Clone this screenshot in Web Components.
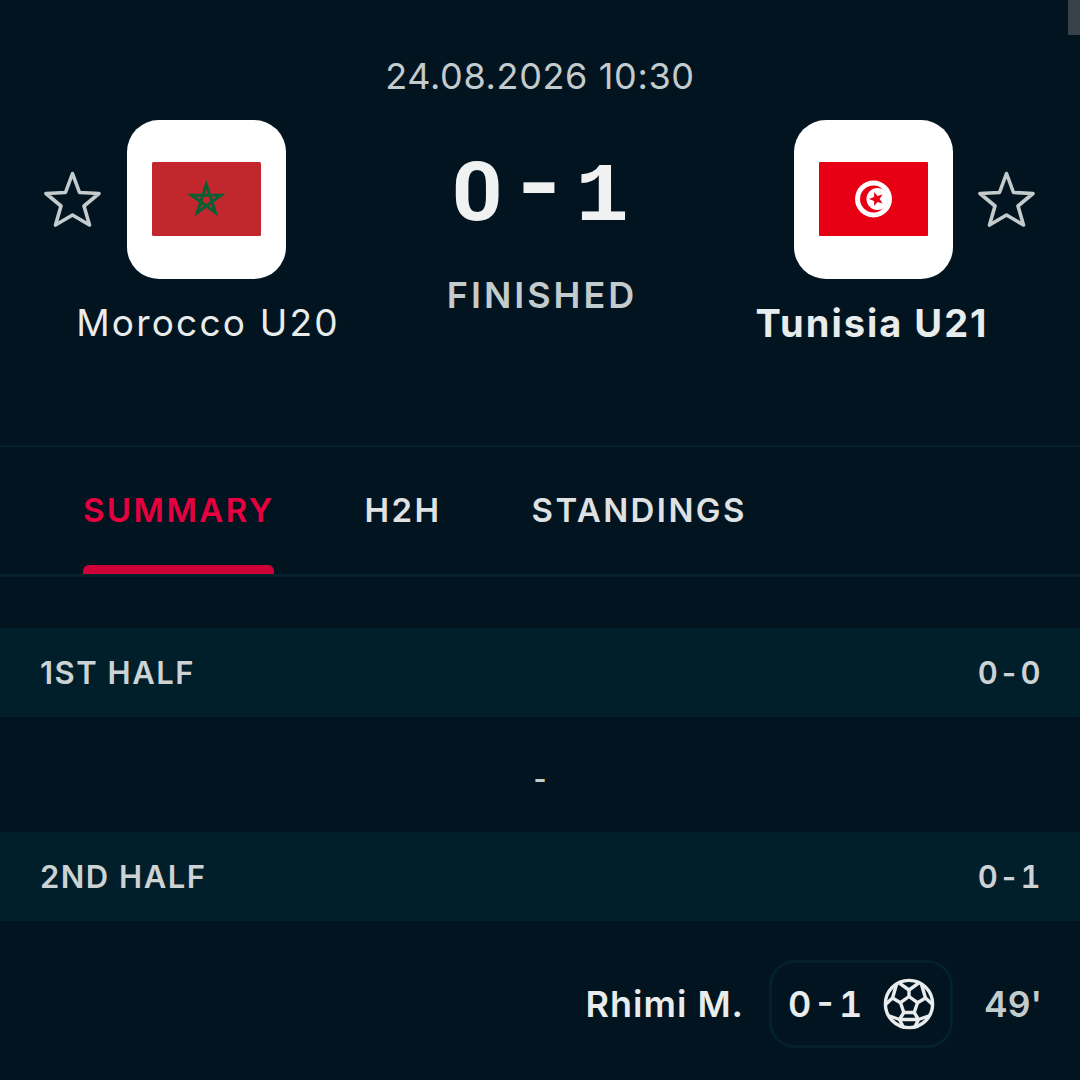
<!DOCTYPE html>
<html>
<head>
<meta charset="utf-8">
<style>
  html, body { margin: 0; background: #01141f; }
  body { width: 1080px; height: 1080px; overflow: hidden; font-family: Inter, "Liberation Sans", sans-serif; color: #e9ecec; position: relative; }
</style>
</head>
<body>
<match-header date="24.08.2026 10:30" status="FINISHED">
  <team-side slot="home" name="Morocco U20">
    <svg viewBox="0 0 109 74" width="109" height="74">
      <rect width="109" height="74" rx="1.5" fill="#c1272d"/>
      <polygon points="54.3,22.5 63.4,50.5 39.6,33.2 69,33.2 45.2,50.5" fill="none" stroke="#0b5e33" stroke-width="3" stroke-miterlimit="8"/>
    </svg>
  </team-side>
  <score-box slot="score"></score-box>
  <team-side slot="away" name="Tunisia U21" side="right" winner>
    <svg viewBox="0 0 109 74" width="109" height="74">
      <rect width="109" height="74" rx="1" fill="#e70013"/>
      <circle cx="54.5" cy="37" r="18.5" fill="#fff"/>
      <circle cx="54.5" cy="37" r="13.5" fill="#e70013"/>
      <circle cx="58.5" cy="37" r="11" fill="#fff"/>
      <polygon points="0,-7.5 1.9,-2.4 7.1,-2.3 3,1 4.4,6.1 0,3.1 -4.4,6.1 -3,1 -7.1,-2.3 -1.9,-2.4" transform="translate(57.5 37) rotate(-90)" fill="#e70013"/>
    </svg>
  </team-side>
</match-header>
<tab-bar>
  <tab-item active>SUMMARY</tab-item>
  <tab-item>H2H</tab-item>
  <tab-item>STANDINGS</tab-item>
</tab-bar>
<period-band label="1ST HALF" score="0 - 0"></period-band>
<empty-events>-</empty-events>
<period-band label="2ND HALF" score="0 - 1"></period-band>
<goal-row player="Rhimi M." score="0 - 1" minute="49'"></goal-row>
<scroll-thumb></scroll-thumb>

<script>
const starIcon = `<svg viewBox="0 0 58 58" width="58" height="58"><polygon points="28.5,2.5 35.5,21.5 55,22.5 40,35 45.5,54 28.5,44 11.5,54 17,35 2,22.5 21.5,21.5" fill="none" stroke="#c4cbcd" stroke-width="3.6" stroke-linejoin="round"/></svg>`;

class MatchHeader extends HTMLElement {
  constructor() {
    super();
    this.attachShadow({ mode: 'open' });
    this.shadowRoot.innerHTML = `
    <style>
      :host { display: block; height: 447px; box-sizing: border-box; padding-top: 54px; border-bottom: 2px solid #04202b; }
      .date { text-align: center; font-size: 36px; line-height: 44px; color: #c4cbcd; letter-spacing: 0.64px; }
      .row { display: grid; grid-template-columns: 413px 253px 414px; margin-top: 22px; }
      .status { text-align: center; padding-left: 5px; font-size: 36px; line-height: 40px; font-weight: 600; letter-spacing: 3px; color: #c4cbcd; margin-top: 15px; }
    </style>
    <div class="date">${this.getAttribute('date')}</div>
    <div class="row">
      <slot name="home"></slot>
      <div>
        <slot name="score"></slot>
        <div class="status">${this.getAttribute('status')}</div>
      </div>
      <slot name="away"></slot>
    </div>`;
  }
}

class TeamSide extends HTMLElement {
  constructor() {
    super();
    this.attachShadow({ mode: 'open' });
    const right = this.getAttribute('side') === 'right';
    this.shadowRoot.innerHTML = `
    <style>
      :host { display: grid; grid-template-columns: 1fr 159px 1fr; justify-items: center; align-content: start; }
      .star { display: flex; align-self: center; }
      .star.l { justify-self: end; margin-right: 25px; grid-column: 1; grid-row: 1; }
      .star.r { justify-self: start; margin-left: 25px; grid-column: 3; grid-row: 1; }
      .logo { grid-column: 2; grid-row: 1; width: 159px; height: 159px; box-sizing: border-box; padding-bottom: 2px; border-radius: 32px; background: #fff; display: flex; align-items: center; justify-content: center; }
      .name { grid-column: 1 / 4; margin-top: 22px; padding-left: 3px; font-size: 37px; line-height: 44px; letter-spacing: 2.2px; color: #e9ecec; white-space: nowrap; }
      :host([winner]) .name { padding-left: 0; padding-right: 2px; font-size: 38px; font-weight: 700; letter-spacing: 2px; }
    </style>
    <span class="star ${right ? 'r' : 'l'}">${starIcon}</span>
    <div class="logo"><slot></slot></div>
    <div class="name">${this.getAttribute('name')}</div>`;
  }
}

class ScoreBox extends HTMLElement {
  constructor() {
    super();
    this.attachShadow({ mode: 'open' });
    this.shadowRoot.innerHTML = `
    <style>
      :host { display: flex; justify-content: center; align-items: baseline; box-sizing: border-box; height: 140px; padding-top: 22px; color: #f0f1f1; line-height: 100px; }
      span { display: block; width: 62.5px; text-align: center; }
      .z { font-family: Roboto, sans-serif; font-weight: 700; font-size: 82px; transform: scaleX(1.08); }
      .h { font-family: Roboto, sans-serif; font-weight: 900; font-size: 84px; transform: translateY(-7px) scaleX(1.25); }
      .o { font-family: "Liberation Mono", monospace; font-weight: 700; font-size: 83px; transform: scaleX(1.07); }
    </style>
    <span class="z">0</span><span class="h">-</span><span class="o">1</span>`;
  }
}

class TabBar extends HTMLElement {
  constructor() {
    super();
    this.attachShadow({ mode: 'open' });
    this.shadowRoot.innerHTML = `
    <style>
      :host { display: flex; height: 130px; box-sizing: border-box; padding-left: 83px; gap: 90px; border-bottom: 3px solid #04202b; }
    </style>
    <slot></slot>`;
  }
}

class TabItem extends HTMLElement {
  constructor() {
    super();
    this.attachShadow({ mode: 'open' });
    this.shadowRoot.innerHTML = `
    <style>
      :host { display: block; position: relative; box-sizing: border-box; padding-top: 41px; font-size: 33px; line-height: 44px; font-weight: 600; letter-spacing: 2.4px; color: #dfe1e2; white-space: nowrap; }
      :host([active]) { color: #e5003f; }
      :host([active])::after { content: ""; position: absolute; left: 0; right: 1px; bottom: 0; height: 9px; border-radius: 6px 6px 0 0; background: #cf0038; }
    </style>
    <slot></slot>`;
  }
}

class PeriodBand extends HTMLElement {
  constructor() {
    super();
    this.attachShadow({ mode: 'open' });
    this.shadowRoot.innerHTML = `
    <style>
      :host { display: flex; justify-content: space-between; align-items: center; height: 89px; box-sizing: border-box; padding: 0 38px 0 40px; background: #011f2b; color: #cdd2d4; font-size: 31px; font-weight: 600; letter-spacing: 1.5px; }
      :host(:first-of-type) { margin-top: 51px; }
      .s { word-spacing: -10px; font-variant-numeric: tabular-nums; }
    </style>
    <span>${this.getAttribute('label')}</span>
    <span class="s">${this.getAttribute('score')}</span>`;
  }
}

class EmptyEvents extends HTMLElement {
  constructor() {
    super();
    this.attachShadow({ mode: 'open' });
    this.shadowRoot.innerHTML = `
    <style>
      :host { display: flex; justify-content: center; align-items: center; height: 115px; box-sizing: border-box; padding-top: 8px; font-size: 28px; font-weight: 600; color: #c4cbcd; }
    </style>
    <slot></slot>`;
  }
}

class SoccerBall extends HTMLElement {
  constructor() {
    super();
    this.attachShadow({ mode: 'open' });
    this.shadowRoot.innerHTML = `
    <style>:host { display: block; width: 52px; height: 52px; margin-top: -1px; } svg { display: block; }</style>
    <svg viewBox="0 0 52 52" width="52" height="52" fill="none" stroke="#e9ecec" stroke-width="3.4" stroke-linejoin="round" stroke-linecap="round">
      <circle cx="26" cy="26" r="23.6"/>
      <polygon points="26,18.5 34.5,24.7 31.2,34.5 20.8,34.5 17.5,24.7"/>
      <path d="M26 18.5V12M26 12L16 4.8M26 12L36 4.8"/>
      <path d="M34.5 24.7L42.5 20M42.5 20L38.5 6.5M42.5 20L49 26"/>
      <path d="M17.5 24.7L9.5 20M9.5 20L13.5 6.5M9.5 20L3 26"/>
      <path d="M31.2 34.5L35.5 41.5M35.5 41.5L45.5 38M35.5 41.5L32 48.8M35.5 41.5H16.5"/>
      <path d="M20.8 34.5L16.5 41.5M16.5 41.5L6.5 38M16.5 41.5L20 48.8"/>
    </svg>`;
  }
}

class GoalRow extends HTMLElement {
  constructor() {
    super();
    this.attachShadow({ mode: 'open' });
    this.shadowRoot.innerHTML = `
    <style>
      :host { display: flex; justify-content: flex-end; align-items: center; margin-top: 39px; padding-right: 38px; font-size: 36px; font-weight: 600; color: #e9ecec; }
      .player { letter-spacing: 1px; margin-right: 25px; }
      .pill { display: flex; align-items: center; gap: 21px; box-sizing: border-box; width: 184px; height: 88px; padding-left: 16px; border: 3px solid #04202b; border-radius: 26px; word-spacing: -7.5px; white-space: nowrap; font-variant-numeric: tabular-nums; }
      .min { margin-left: 31px; font-size: 35.5px; color: #c4cbcd; }
    </style>
    <span class="player">${this.getAttribute('player')}</span>
    <div class="pill"><span>${this.getAttribute('score')}</span><soccer-ball></soccer-ball></div>
    <span class="min">${this.getAttribute('minute')}</span>`;
  }
}

class ScrollThumb extends HTMLElement {
  constructor() {
    super();
    this.attachShadow({ mode: 'open' });
    this.shadowRoot.innerHTML = `
    <style>:host { display: block; position: absolute; top: 0; right: 0; width: 12px; height: 35px; background: #394249; }</style>`;
  }
}

customElements.define('match-header', MatchHeader);
customElements.define('team-side', TeamSide);
customElements.define('score-box', ScoreBox);
customElements.define('tab-bar', TabBar);
customElements.define('tab-item', TabItem);
customElements.define('period-band', PeriodBand);
customElements.define('empty-events', EmptyEvents);
customElements.define('soccer-ball', SoccerBall);
customElements.define('goal-row', GoalRow);
customElements.define('scroll-thumb', ScrollThumb);
</script>
</body>
</html>
